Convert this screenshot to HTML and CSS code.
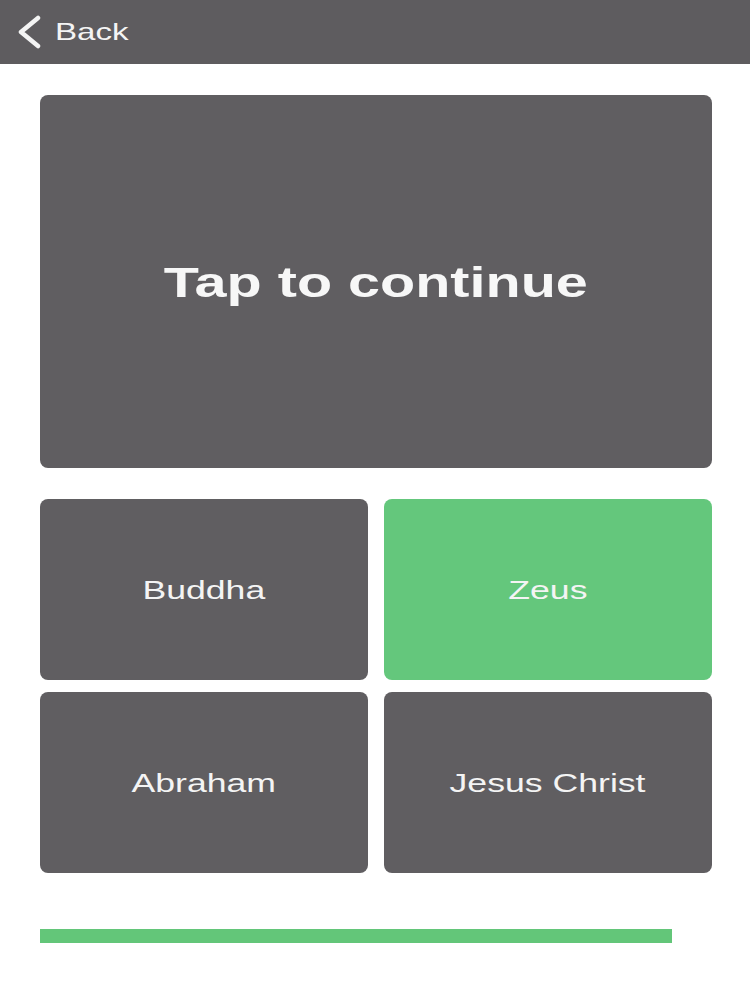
FILE: index.html
```html
<!DOCTYPE html>
<html>
<head>
<meta charset="utf-8">
<link rel="stylesheet" href="styles.css">
</head>
<body>
<header class="topbar">
  <div class="back">
    <svg class="chev" width="27" height="34" viewBox="0 0 27 34"><path d="M23 3 L6 17 L23 31" fill="none" stroke="#f4f4f4" stroke-width="4.5" stroke-linecap="round" stroke-linejoin="round"/></svg>
    <span class="back-text">Back</span>
  </div>
</header>
<main class="content">
  <div class="prompt"><span class="wide">Tap to continue</span></div>
  <div class="answers">
    <div class="answer"><span class="wide">Buddha</span></div>
    <div class="answer correct"><span class="wide">Zeus</span></div>
    <div class="answer"><span class="wide">Abraham</span></div>
    <div class="answer"><span class="wide">Jesus Christ</span></div>
  </div>
  <div class="progress"><div class="progress-fill" style="width:632px"></div></div>
</main>
</body>
</html>
```
FILE: styles.css
```css
html, body { margin: 0; padding: 0; background: #ffffff; }
body { font-family: "Liberation Sans", Arial, sans-serif; width: 750px; }
.topbar { height: 64px; background: #5e5c5f; display: flex; align-items: center; }
.back { display: flex; align-items: center; margin-left: 15px; }
.chev { display: block; }
.back-text { display: inline-block; color: #f4f4f4; font-size: 24px; margin-left: 13px; transform: scaleX(1.38); transform-origin: left center; }
.wide { display: inline-block; transform: scaleX(1.37); white-space: nowrap; }
.content { padding: 31px 38px 0 40px; }
.prompt { height: 373px; background: #605e61; border-radius: 8px; display: flex; align-items: center; justify-content: center; color: #f7f7f7; font-size: 42px; font-weight: bold; padding-top: 3px; box-sizing: border-box; }
.answers { margin-top: 31px; display: grid; grid-template-columns: 328px 328px; column-gap: 16px; row-gap: 12px; }
.answer { height: 181px; background: #605e61; border-radius: 8px; display: flex; align-items: center; justify-content: center; color: #f4f4f4; font-size: 26px; padding-top: 2px; box-sizing: border-box; }
.answer.correct { background: #64c77c; }
.progress { margin-top: 56px; height: 14px; }
.progress-fill { height: 14px; background: #63c679; }
```
